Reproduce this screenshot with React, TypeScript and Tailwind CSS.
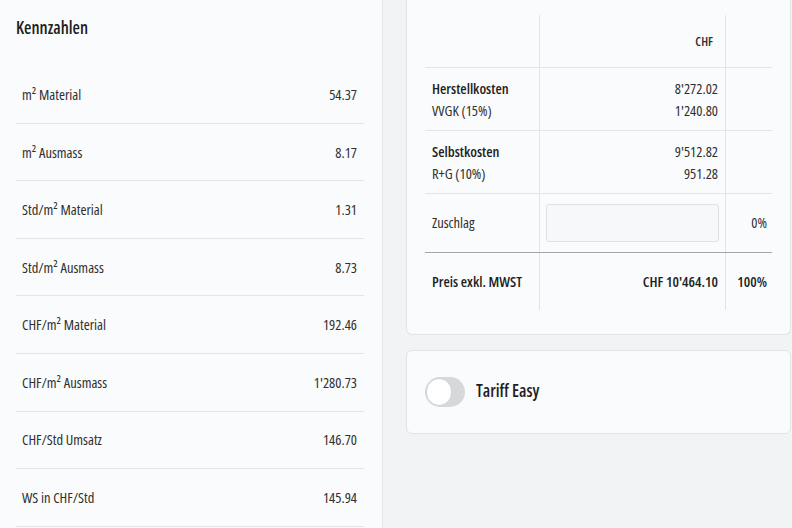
const kennzahlen = [
  { label: "m² Material", value: "54.37" },
  { label: "m² Ausmass", value: "8.17" },
  { label: "Std/m² Material", value: "1.31" },
  { label: "Std/m² Ausmass", value: "8.73" },
  { label: "CHF/m² Material", value: "192.46" },
  { label: "CHF/m² Ausmass", value: "1'280.73" },
  { label: "CHF/Std Umsatz", value: "146.70" },
  { label: "WS in CHF/Std", value: "145.94" },
];

const font = { fontFamily: '"Open Sans", "Noto Sans", sans-serif' };

const KostenGruppe = ({ title, titleValue, sub, subValue }: { title: string; titleValue: string; sub: string; subValue: string }) => (
  <div className="grid grid-cols-[115px_186px_46px] h-[63px] border-b border-[#e2e4e7]">
    <div className="border-r border-[#e2e4e7] pl-[7px] pt-[1px] flex flex-col justify-center leading-[22px]">
      <span className="font-semibold text-[#222]">{title}</span>
      <span>{sub}</span>
    </div>
    <div className="border-r border-[#e2e4e7] pr-[7px] pt-[1px] flex flex-col justify-center items-end leading-[22px]">
      <span>{titleValue}</span>
      <span>{subValue}</span>
    </div>
    <div />
  </div>
);

export default function App() {
  return (
    <div
      style={font}
      className="flex w-[792px] h-[528px] overflow-hidden text-[14.5px] text-[#2f2f2f] [font-stretch:condensed]"
    >
      {/* Kennzahlen */}
      <div className="w-[383px] shrink-0 bg-[#fafbfc] border-r border-[#e4e6e9] px-4">
        <h2 className="h-[66px] pt-[16px] text-[17px] font-semibold text-[#1f1f1f] leading-[24px]">Kennzahlen</h2>
        <div className="w-[348px]">
          {kennzahlen.map((k) => (
            <div
              key={k.label}
              className="h-[57.6px] flex items-center justify-between pl-[6px] pr-[7px] pt-[1px] border-b border-[#e2e4e7]"
            >
              <span>{k.label}</span>
              <span>{k.value}</span>
            </div>
          ))}
        </div>
      </div>

      {/* rechte Spalte */}
      <div className="flex-1 bg-[#f2f3f5] pl-[23px] pr-[2px]">
        <div className="bg-[#fafbfc] border border-t-0 border-[#e2e4e7] rounded-b-md px-[18px] pt-[15px] pb-[24px]">
          <div className="grid grid-cols-[115px_186px_46px] h-[53px] border-b border-[#e2e4e7]">
            <div className="border-r border-[#e2e4e7]" />
            <div className="border-r border-[#e2e4e7] pr-[12px] flex items-center justify-end text-[12.5px] font-semibold pt-[3px]">
              CHF
            </div>
            <div />
          </div>
          <KostenGruppe title="Herstellkosten" titleValue="8'272.02" sub="VVGK (15%)" subValue="1'240.80" />
          <KostenGruppe title="Selbstkosten" titleValue="9'512.82" sub="R+G (10%)" subValue="951.28" />
          <div className="grid grid-cols-[115px_186px_46px] h-[59px] border-b border-[#a3a5a8]">
            <div className="border-r border-[#e2e4e7] pl-[7px] flex items-center">Zuschlag</div>
            <div className="border-r border-[#e2e4e7] px-[6px] flex items-center">
              <div className="w-full h-[38px] rounded-[3px] border border-[#dfe1e4] bg-[#f7f8f9]" />
            </div>
            <div className="flex items-center justify-end pr-[5px]">0%</div>
          </div>
          <div className="grid grid-cols-[115px_186px_46px] h-[57px] font-semibold text-[#1f1f1f]">
            <div className="border-r border-[#e2e4e7] pl-[7px] flex items-center">Preis exkl. MWST</div>
            <div className="border-r border-[#e2e4e7] pr-[7px] flex items-center justify-end">CHF 10'464.10</div>
            <div className="flex items-center justify-end pr-[5px]">100%</div>
          </div>
        </div>

        <div className="mt-[15px] h-[84px] bg-[#fafbfc] border border-[#e2e4e7] rounded-md pl-[18px] flex items-center gap-[11px]">
          <div className="relative w-[40px] h-[30px] rounded-full bg-[#d6d8db]">
            <div className="absolute left-[1px] top-[1px] w-[26px] h-[28px] rounded-full bg-white border border-[#cfd1d4]" />
          </div>
          <span className="text-[17px] font-semibold text-[#1f1f1f] pb-[2px]">Tariff Easy</span>
        </div>
      </div>
    </div>
  );
}
